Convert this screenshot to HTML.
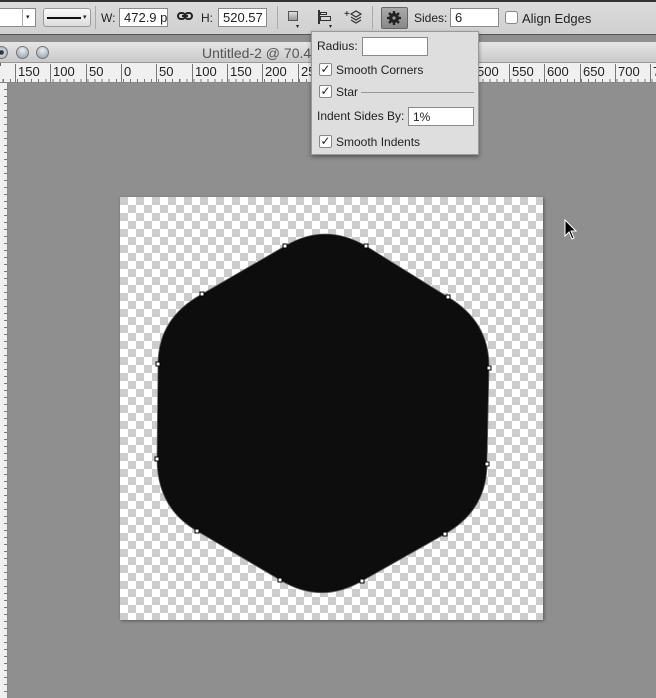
<!DOCTYPE html>
<html><head><meta charset="utf-8"><style>
*{margin:0;padding:0;box-sizing:border-box}
body{width:656px;height:698px;overflow:hidden;background:#8f8f8f;font-family:"Liberation Sans",sans-serif;font-size:12px;color:#222;position:relative}
.abs{position:absolute;white-space:nowrap}
.tb{left:0;top:0;width:656px;height:35px;background:linear-gradient(#dcdcdc,#d0d0d0);border-top:2px solid #333;border-bottom:1px solid #555}
.inp{background:#fff;border:1px solid #8a8a8a;height:19px;font-size:13px;padding:1px 4px;line-height:16px;overflow:hidden}
.btn{background:linear-gradient(#fafafa,#ddd);border:1px solid #999;border-radius:3px;height:19px}
.ttl{left:0;top:42px;width:656px;height:21px;background:linear-gradient(#e6e6e6,#c9c9c9);border-bottom:1px solid #999}
.circ{width:13px;height:13px;border-radius:50%;background:radial-gradient(circle at 50% 30%,#e8eef4,#8a9aaa);border:1px solid #777;top:46px}
.rul{left:0;top:63px;width:656px;height:20px;background-color:#f0f0f0;border-bottom:1px solid #888;font-size:13px;
background-image:linear-gradient(#666,#666);background-size:1px 3px;background-repeat:no-repeat}
.rul span{position:absolute;top:1px;border-left:1px solid #777;padding-left:2px;height:18px;line-height:16px}
.ticks{left:0;top:79px;width:656px;height:3px;background:repeating-linear-gradient(90deg,#777 0 1px,transparent 1px 7.05px);background-position:3px 0}
.lr{left:0;top:83px;width:8px;height:615px;background-color:#f0f0f0;border-right:1px solid #888;background-image:repeating-linear-gradient(180deg,transparent 0 6px,#777 6px 7px);background-size:4px 100%;background-repeat:no-repeat;background-position:4px 0}
.doc{left:120px;top:197px;width:423px;height:423px;background-color:#fff;background-image:linear-gradient(45deg,#ccc 25%,transparent 25%,transparent 75%,#ccc 75%),linear-gradient(45deg,#ccc 25%,transparent 25%,transparent 75%,#ccc 75%);background-size:16px 16px;background-position:8px 0,0 8px;box-shadow:1px 1px 3px rgba(0,0,0,.4)}
.pop{left:311px;top:31px;width:168px;height:124px;background:#dedede;border:1px solid #999;box-shadow:0 2px 4px rgba(0,0,0,.4);font-size:12px}
.cb{position:absolute;width:13px;height:13px;background:#fff;border:1px solid #888;border-radius:2px;font-size:12px;line-height:11px;text-align:center}
</style></head><body>
<div class="abs tb"></div>
<div class="abs inp" style="left:-2px;top:8px;width:38px;height:19px;padding:0"></div>
<div class="abs" style="left:22px;top:8px;width:1px;height:19px;background:#aaa"></div>
<div class="abs" style="left:26px;top:13px;font-size:7px">▾</div>
<div class="abs btn" style="left:43px;top:8px;width:48px"></div>
<div class="abs" style="left:47px;top:17px;width:34px;height:2px;background:#111"></div>
<div class="abs" style="left:83px;top:13px;font-size:7px">▾</div>
<div class="abs" style="left:95px;top:6px;width:1px;height:23px;background:#aaa"></div>
<div class="abs" style="left:101px;top:11px">W:</div>
<div class="abs inp" style="left:119px;top:8px;width:49px">472.9 p</div>
<svg class="abs" style="left:177px;top:11px" width="16" height="10"><rect x="1" y="2" width="7" height="6" rx="3" fill="none" stroke="#222" stroke-width="2"/><rect x="8" y="2" width="7" height="6" rx="3" fill="none" stroke="#222" stroke-width="2"/><line x1="5" y1="5" x2="11" y2="5" stroke="#222" stroke-width="2"/></svg>
<div class="abs" style="left:201px;top:11px">H:</div>
<div class="abs inp" style="left:218px;top:8px;width:49px">520.57</div>
<div class="abs" style="left:277px;top:6px;width:1px;height:23px;background:#aaa"></div>
<div class="abs" style="left:288px;top:11px;width:10px;height:10px;border:1px solid #555;background:linear-gradient(#ddd,#999)"></div>
<div class="abs" style="left:296px;top:23px;font-size:6px">▾</div>
<div class="abs" style="left:318px;top:10px;width:3px;height:14px;border-left:2px solid #333"></div>
<div class="abs" style="left:320px;top:12px;width:7px;height:3px;border:1px solid #333"></div>
<div class="abs" style="left:320px;top:16px;width:11px;height:5px;border:1px solid #333"></div>
<div class="abs" style="left:329px;top:23px;font-size:6px">▾</div>
<svg class="abs" style="left:344px;top:8px" width="20" height="20"><text x="0" y="9" font-size="10" font-family="Liberation Sans">+</text><g fill="none" stroke="#333" stroke-width="1.2"><path d="M7 6 L12 3 L17 6 L12 9 Z"/><path d="M7 9 L12 12 L17 9"/><path d="M7 12 L12 15 L17 12"/></g></svg>
<div class="abs" style="left:372px;top:6px;width:1px;height:23px;background:#aaa"></div>
<div class="abs" style="left:381px;top:7px;width:27px;height:22px;background:linear-gradient(#aaa,#888);border:1px solid #666;border-radius:2px"></div>
<svg class="abs" style="left:386px;top:10px" width="16" height="16"><g fill="#222"><circle cx="8" cy="8" r="5"/><g stroke="#222" stroke-width="2.4"><line x1="8" y1="1" x2="8" y2="15"/><line x1="1" y1="8" x2="15" y2="8"/><line x1="3" y1="3" x2="13" y2="13"/><line x1="13" y1="3" x2="3" y2="13"/></g></g><circle cx="8" cy="8" r="1.6" fill="#999"/></svg>
<div class="abs" style="left:414px;top:11px">Sides:</div>
<div class="abs inp" style="left:450px;top:8px;width:49px">6</div>
<div class="cb" style="left:505px;top:11px;border-radius:3px"></div>
<div class="abs" style="left:522px;top:11px;font-size:13px">Align Edges</div>

<div class="abs ttl"></div>
<div class="abs circ" style="left:-5px;background:radial-gradient(circle,#333 25%,#cfd8e0 35%,#8a9aaa)"></div>
<div class="abs circ" style="left:16px"></div>
<div class="abs circ" style="left:36px"></div>
<div class="abs" style="left:202px;top:45px;font-size:14px;color:#555">Untitled-2 @ 70.4</div>
<div class="abs rul">
<span style="left:15px">150</span><span style="left:50px">100</span><span style="left:86px">50</span><span style="left:121px">0</span><span style="left:156px">50</span><span style="left:192px">100</span><span style="left:227px">150</span><span style="left:262px">200</span><span style="left:298px">250</span><span style="left:474px">500</span><span style="left:509px">550</span><span style="left:544px">600</span><span style="left:580px">650</span><span style="left:615px">700</span><span style="left:650px">7</span>
</div>
<div class="abs ticks"></div>
<div class="abs lr"></div>

<div class="abs doc"></div>
<svg class="abs" style="left:0;top:0" width="656" height="698">
<path d="M285,246 Q325,222 366,246 L448,297 Q490,322 489,368 L487,464 Q487,510 445,534 L362,581 Q321,605 280,580 L197,531 Q157,508 157,459 L158,364 Q158,318 202,294 Z" fill="#0d0d0d" stroke="#666" stroke-width="0.8"/>
<g fill="#fff" stroke="#000" stroke-width="1">
<rect x="283" y="244" width="4" height="4"/><rect x="364" y="244" width="4" height="4"/><rect x="446" y="295" width="4" height="4"/><rect x="487" y="366" width="4" height="4"/><rect x="485" y="462" width="4" height="4"/><rect x="443" y="532" width="4" height="4"/><rect x="360" y="579" width="4" height="4"/><rect x="278" y="578" width="4" height="4"/><rect x="195" y="529" width="4" height="4"/><rect x="155" y="457" width="4" height="4"/><rect x="156" y="362" width="4" height="4"/><rect x="200" y="292" width="4" height="4"/>
</g>
<path d="M565,220 L565,236 L569,232 L572,239 L574,238 L571,231 L576,231 Z" fill="#000" stroke="#fff" stroke-width="1"/>
</svg>

<div class="abs pop">
<div class="abs" style="left:5px;top:7px">Radius:</div>
<div class="abs inp" style="left:50px;top:5px;width:66px;height:19px"></div>
<div class="cb" style="left:7px;top:31px">✓</div><div class="abs" style="left:24px;top:31px">Smooth Corners</div>
<div class="cb" style="left:7px;top:53px">✓</div><div class="abs" style="left:24px;top:53px">Star</div>
<div class="abs" style="left:49px;top:60px;width:113px;height:1px;background:#999"></div>
<div class="abs" style="left:5px;top:77px">Indent Sides By:</div>
<div class="abs inp" style="left:96px;top:75px;width:66px;height:19px;font-size:12px">1%</div>
<div class="cb" style="left:7px;top:103px">✓</div><div class="abs" style="left:24px;top:103px">Smooth Indents</div>
</div>
</body></html>
